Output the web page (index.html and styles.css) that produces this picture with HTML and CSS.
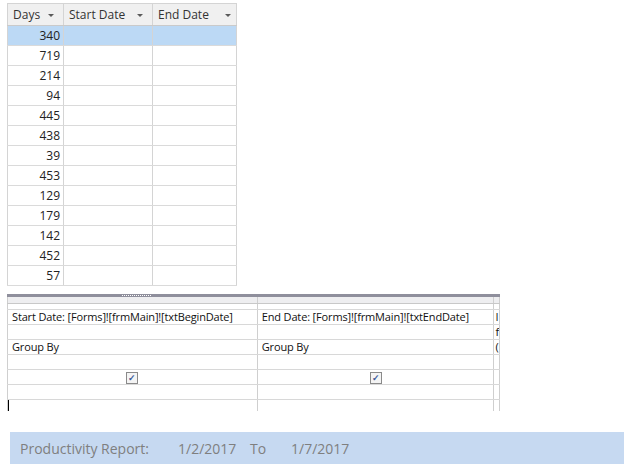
FILE: index.html
```html
<!DOCTYPE html>
<html lang="en">
<head>
    <meta charset="UTF-8">
    <title>Query Design</title>
    <link rel="stylesheet" href="styles.css">
</head>
<body>
    <div class="datasheet-wrap">
        <table class="datasheet">
            <thead>
                <tr>
                    <th class="col-days">Days <span class="arrow"></span></th>
                    <th class="col-start">Start Date <span class="arrow"></span></th>
                    <th class="col-end">End Date <span class="arrow"></span></th>
                </tr>
            </thead>
            <tbody>
                <tr class="selected"><td class="num">340</td><td></td><td></td></tr>
                <tr><td class="num">719</td><td></td><td></td></tr>
                <tr><td class="num">214</td><td></td><td></td></tr>
                <tr><td class="num">94</td><td></td><td></td></tr>
                <tr><td class="num">445</td><td></td><td></td></tr>
                <tr><td class="num">438</td><td></td><td></td></tr>
                <tr><td class="num">39</td><td></td><td></td></tr>
                <tr><td class="num">453</td><td></td><td></td></tr>
                <tr><td class="num">129</td><td></td><td></td></tr>
                <tr><td class="num">179</td><td></td><td></td></tr>
                <tr><td class="num">142</td><td></td><td></td></tr>
                <tr><td class="num">452</td><td></td><td></td></tr>
                <tr><td class="num">57</td><td></td><td></td></tr>
            </tbody>
        </table>
    </div>

    <div class="design">
        <div class="splitter"><span class="grip"></span></div>
        <table class="grid">
            <tr class="strip"><td class="c1"></td><td class="c2"></td><td class="c3"></td></tr>
            <tr class="selector"><td></td><td></td><td></td></tr>
            <tr><td>Start Date: [Forms]![frmMain]![txtBeginDate]</td><td>End Date: [Forms]![frmMain]![txtEndDate]</td><td>I</td></tr>
            <tr><td></td><td></td><td>f</td></tr>
            <tr><td>Group By</td><td>Group By</td><td>(</td></tr>
            <tr><td></td><td></td><td></td></tr>
            <tr><td class="check"><span class="box">&#10003;</span></td><td class="check"><span class="box">&#10003;</span></td><td></td></tr>
            <tr><td></td><td></td><td></td></tr>
            <tr class="last"><td class="caret-cell"><span class="caret"></span></td><td></td><td></td></tr>
        </table>
    </div>

    <div class="banner">
        <span class="label">Productivity Report:</span>
        <span class="date">1/2/2017</span>
        <span class="to">To</span>
        <span class="date">1/7/2017</span>
    </div>
</body>
</html>
```

FILE: styles.css
```css
body {
    margin: 0;
    background: #ffffff;
    font-family: "Open Sans", "Noto Sans", sans-serif;
    color: #000000;
}
.datasheet-wrap {
    padding: 3px 0 0 7px;
}
.datasheet {
    border-collapse: collapse;
    table-layout: fixed;
    font-size: 12px;
}
.datasheet th {
    height: 21px;
    padding: 0 0 0 5px;
    background: #f0f0f0;
    border: 1px solid #d4d4d4;
    border-bottom-color: #cacaca;
    font-weight: normal;
    text-align: left;
    color: #333333;
    white-space: nowrap;
}
.col-days { width: 50px; }
.col-start { width: 83px; }
.col-end { width: 78px; }
.arrow {
    display: inline-block;
    width: 0;
    height: 0;
    border-left: 3px solid transparent;
    border-right: 3px solid transparent;
    border-top: 3px solid #5a5a5a;
    vertical-align: middle;
    margin-left: 5px;
}
.col-start .arrow { margin-left: 9px; }
.col-end .arrow { margin-left: 13px; }
.datasheet td {
    height: 19px;
    padding: 0 3px 0 0;
    border: 1px solid #dadada;
    border-left-color: #d4d4d4;
    border-right-color: #d4d4d4;
    text-align: right;
    color: #222222;
}
.datasheet tr.selected td {
    background: #bcd9f5;
}
.design {
    margin-top: 8px;
    padding-left: 7px;
    width: 493px;
}
.splitter {
    height: 3px;
    background: #8f8f9c;
    position: relative;
}
.grip {
    position: absolute;
    left: 115px;
    top: 1px;
    width: 30px;
    height: 1px;
    background: repeating-linear-gradient(90deg, #ffffff 0 1px, transparent 1px 2px);
}
.grid {
    border-collapse: collapse;
    table-layout: fixed;
    font-size: 11px;
    letter-spacing: -0.15px;
}
.grid td {
    height: 14px;
    padding: 0 0 0 4px;
    border-left: 1px solid #cfcfcf;
    border-right: 1px solid #cfcfcf;
    border-bottom: 1px solid #d8d8d8;
    white-space: nowrap;
    overflow: hidden;
    line-height: 14px;
    color: #111111;
}
.grid .c1 { width: 246px; }
.grid .c2 { width: 233px; }
.grid .c3 { width: 3px; }
.grid td:nth-child(3) {
    padding-left: 1px;
}
.grid tr.strip td {
    height: 6px;
    background: #eeeef0;
    border-bottom-color: #c8c8c8;
}
.grid tr.selector td {
    height: 5px;
}
.grid tr.last td {
    height: 11px;
    border-bottom: none;
}
.grid td.check {
    text-align: center;
    padding: 0;
}
.box {
    display: inline-block;
    width: 10px;
    height: 10px;
    border: 1px solid #8a8a8a;
    background: #f4f4f4;
    font-size: 9px;
    line-height: 10px;
    color: #3b5a9a;
    text-align: center;
    vertical-align: middle;
    font-weight: bold;
}
.caret-cell {
    position: relative;
}
.caret {
    position: absolute;
    left: -1px;
    top: -2px;
    width: 2px;
    height: 13px;
    background: #000000;
}
.banner {
    margin: 21px 0 0 10px;
    width: 604px;
    height: 32px;
    padding-left: 10px;
    background: #c6d9f1;
    display: flex;
    align-items: center;
    font-size: 14px;
    color: #7f7f7f;
}
.label { width: 158px; }
.date { width: 72px; }
.to { width: 41px; }
```
